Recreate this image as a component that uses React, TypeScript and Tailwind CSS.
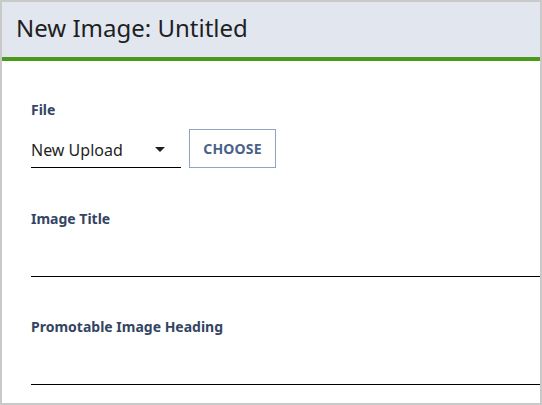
export default function App() {
  const font = { fontFamily: '"Noto Sans", "Open Sans", sans-serif' };

  return (
    <div
      className="w-[542px] h-[405px] border-2 border-[#c9c9c9] bg-white overflow-hidden"
      style={font}
    >
      {/* Header */}
      <div className="h-[59px] bg-[#e1e6ef] border-b-4 border-[#4c9a1a] px-[14px] flex items-center">
        <h1 className="text-[24px] leading-none text-[#1f1f1f] -mt-[4px]">New Image: Untitled</h1>
      </div>

      {/* Form */}
      <div className="pl-[29px] pt-[40px] w-[620px]">
        <div className="mb-[42px]">
          <label className="block text-[14px] leading-[18px] font-bold text-[#344563] mb-[11px]">File</label>
          <div className="flex items-start gap-[8px]">
            <div className="w-[150px] h-[38px] border-b border-black flex items-center justify-between pr-[16px]">
              <span className="text-[16px] text-[#1f1f1f] mt-[2px]">New Upload</span>
              <svg width="10" height="5" viewBox="0 0 10 5" className="mt-[1px]">
                <path d="M0 0h10L5 5z" fill="#1f1f1f" />
              </svg>
            </div>
            <button className="h-[39px] w-[87px] -mt-[1px] border border-[#8fa3c2] text-[14px] font-bold tracking-[0.2px] text-[#4a6286] bg-white">
              CHOOSE
            </button>
          </div>
        </div>

        <div className="mb-[41px]">
          <label className="block text-[14px] leading-[18px] font-bold text-[#344563] mb-[11px]">Image Title</label>
          <div className="h-[38px] border-b border-black" />
        </div>

        <div>
          <label className="block text-[14px] leading-[18px] font-bold text-[#344563] mb-[11px]">Promotable Image Heading</label>
          <div className="h-[38px] border-b border-black" />
        </div>
      </div>
    </div>
  );
}
